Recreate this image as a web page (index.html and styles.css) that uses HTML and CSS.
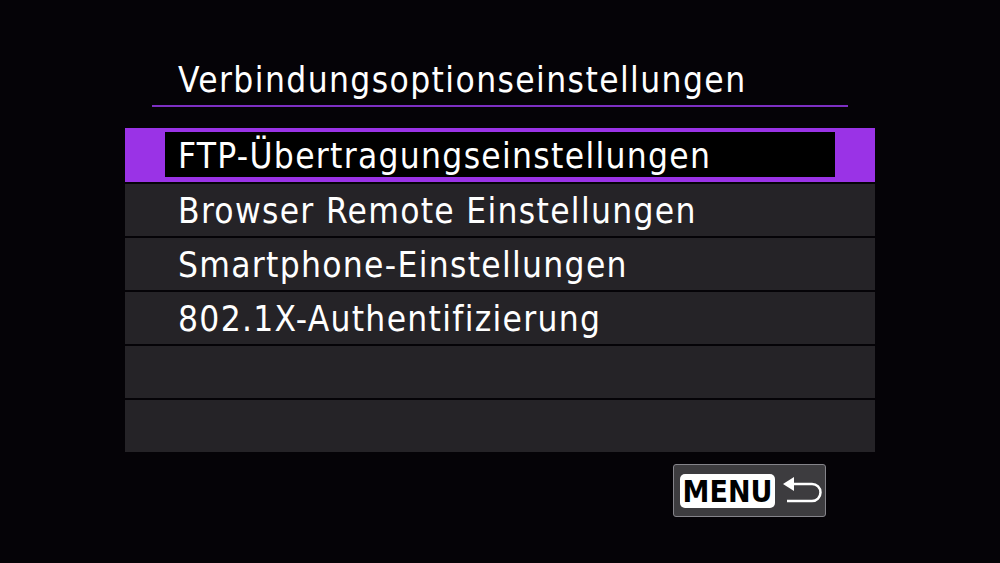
FILE: index.html
```html
<!DOCTYPE html>
<html lang="de">
<head>
    <meta charset="UTF-8">
    <title>Verbindungsoptionseinstellungen</title>
    <link rel="stylesheet" href="styles.css">
</head>
<body>
    <div class="screen">
        <!-- タイトル -->
        <div class="title">Verbindungsoptionseinstellungen</div>

        <!-- メニュー項目 -->
        <ul class="menu-list">
            <li class="menu-item selected"><span class="item-box">FTP-Übertragungseinstellungen</span></li>
            <li class="menu-item"><span class="item-box">Browser Remote Einstellungen</span></li>
            <li class="menu-item"><span class="item-box">Smartphone-Einstellungen</span></li>
            <li class="menu-item"><span class="item-box">802.1X-Authentifizierung</span></li>
            <li class="menu-item"><span class="item-box"></span></li>
            <li class="menu-item"><span class="item-box"></span></li>
        </ul>

        <!-- 戻るボタン -->
        <div class="footer">
            <div class="menu-button">
                <span class="menu-label">MENU</span>
                <svg class="back-icon" width="40" height="30" viewBox="0 0 40 30">
                    <path d="M0 8 L11 1 L11 15 Z" fill="#fff"/>
                    <path d="M10 8 H29 A8.5 8.5 0 0 1 29 25 H4" fill="none" stroke="#fff" stroke-width="2.5"/>
                </svg>
            </div>
        </div>
    </div>
</body>
</html>
```

FILE: styles.css
```css
/* 全体 */
body {
    margin: 0;
    padding: 0;
    background-color: #050307;
    font-family: 'DejaVu Sans Condensed', 'DejaVu Sans', sans-serif;
    font-stretch: condensed;
    color: #fff;
}

.screen {
    width: 1000px;
    height: 563px;
    padding-top: 60px;
    box-sizing: border-box;
}

.title {
    width: 670px;
    margin-left: 152px;
    padding-left: 26px;
    height: 45px;
    line-height: 40px;
    font-size: 35px;
    letter-spacing: 1.4px;
    border-bottom: 2px solid #7c2fc2;
}

.menu-list {
    list-style: none;
    margin: 21px 0 0 125px;
    padding: 0;
    width: 750px;
    display: flex;
    flex-direction: column;
    gap: 2px;
}

.menu-item {
    height: 52px;
    background-color: #252327;
    display: flex;
    padding: 0 40px;
}

.menu-item.selected {
    height: 54px;
    background-color: #9a33e6;
    padding: 4px 40px 5px;
    box-sizing: border-box;
}

.item-box {
    flex: 1;
    padding-left: 13px;
    padding-top: 2px;
    font-size: 35px;
    letter-spacing: 1.3px;
    line-height: 50px;
}

.selected .item-box {
    background-color: #000;
    padding-top: 4px;
    line-height: 41px;
}

.footer {
    display: flex;
    justify-content: flex-end;
    padding-right: 174px;
    margin-top: 12px;
}

.menu-button {
    width: 153px;
    height: 53px;
    box-sizing: border-box;
    background-color: #3d3c3f;
    border: 1px solid #85848a;
    border-radius: 3px;
    display: flex;
    align-items: center;
    padding-left: 6px;
    gap: 8px;
}

.menu-label {
    background-color: #fff;
    color: #000;
    border-radius: 5px;
    width: 95px;
    height: 34px;
    line-height: 35px;
    text-align: center;
    font-size: 30px;
    font-weight: bold;
}
```
